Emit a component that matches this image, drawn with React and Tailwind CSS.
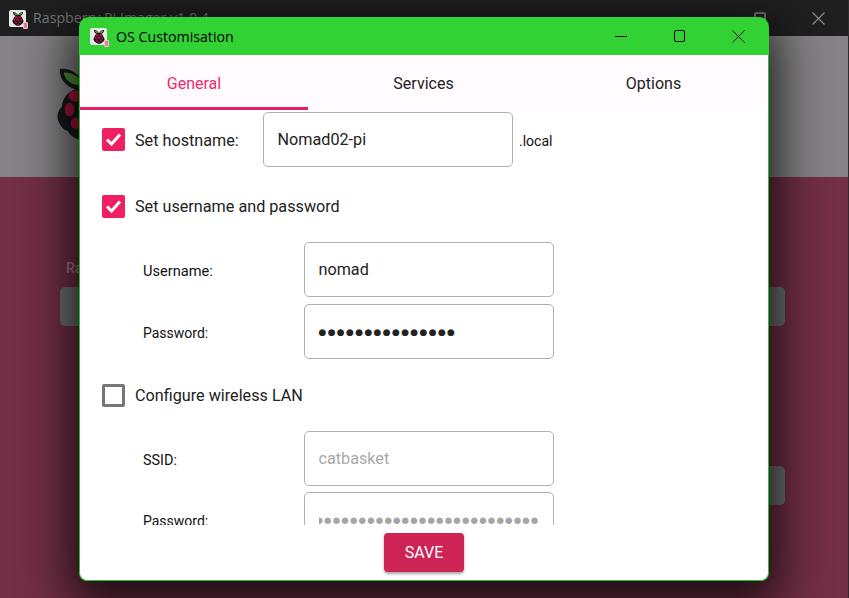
const roboto = { fontFamily: 'Roboto, sans-serif' };

function Berry({ size, className = '' }) {
  return (
    <svg viewBox="0 0 64 80" width={size} height={size * 1.25} className={className}>
      <path d="M32 22C24 8 14 4 5 5c-1 9 6 19 16 21-8 3-13 9-14 18-4 4-6 10-3 16 2 5 5 8 9 9 3 6 10 10 19 10s16-4 19-10c4-1 7-4 9-9 3-6 1-12-3-16-1-9-6-15-14-18 10-2 17-12 16-21-9-1-19 3-27 17z" fill="#16181a" />
      <path d="M30 21C24 12 16 8 9 9c1 7 9 15 21 12zM34 21c6-9 14-13 21-12-1 7-9 15-21 12z" fill="#4f9136" />
      <g fill="#a5143c">
        <ellipse cx="22" cy="33" rx="8" ry="6" />
        <ellipse cx="42" cy="33" rx="8" ry="6" />
        <ellipse cx="32" cy="46" rx="8" ry="7" />
        <ellipse cx="15" cy="47" rx="5" ry="7" />
        <ellipse cx="49" cy="47" rx="5" ry="7" />
        <ellipse cx="22" cy="61" rx="6" ry="6" />
        <ellipse cx="42" cy="61" rx="6" ry="6" />
        <ellipse cx="32" cy="70" rx="6" ry="4" />
      </g>
    </svg>
  );
}

function AppIcon() {
  return (
    <div className="relative w-[17px] h-[17px] bg-[#e9e9e9] rounded-[2px] flex items-center justify-center shrink-0">
      <Berry size={12} />
      <span className="absolute right-[-2px] bottom-[-2px] w-[5px] h-[7px] bg-[#e77f98] rounded-[1px] border border-[#f3c2cf]" />
    </div>
  );
}

function Check({ checked }) {
  if (!checked) {
    return <div className="w-[23px] h-[23px] rounded-[2px] border-[3px] border-[#777777] shrink-0" />;
  }
  return (
    <div className="w-[23px] h-[23px] rounded-[2px] bg-[#ee2060] shrink-0 flex items-center justify-center">
      <svg width="19" height="19" viewBox="0 0 19 19" fill="none">
        <path d="M3 9.5l4.5 4.5L16 4.5" stroke="#fff" strokeWidth="3" />
      </svg>
    </div>
  );
}

function Field({ children, className = '' }) {
  return (
    <div className={`w-[250px] h-[55px] shrink-0 rounded-[5px] border-[1.5px] border-[#b0b0b0] bg-white px-[13.5px] pt-[2px] flex items-center text-[16.2px] ${className}`}>
      {children}
    </div>
  );
}

function SubRow({ label, labelSize = 'text-[14.6px]', children, className = '' }) {
  return (
    <div className={`flex items-center ${className}`}>
      <span className={`w-[202px] pl-[41px] pt-[4px] text-[#111] shrink-0 ${labelSize}`}>{label}</span>
      {children}
    </div>
  );
}

export default function App() {
  return (
    <div className="relative w-[849px] h-[598px] overflow-hidden bg-[#722f46]" style={roboto}>
      {/* Window behind the dialog */}
      <div className="h-[36px] bg-[#1f1f1f] flex items-center pl-[9px] pr-[24px]">
        <AppIcon />
        <span className="ml-[7px] text-[14.2px] text-[#77787a]" style={{ fontFamily: '"Open Sans", sans-serif' }}>Raspberry Pi Imager v1.0.4</span>
        <div className="ml-auto flex items-center gap-[46px]">
          <div className="w-[12px] h-[12px] border-2 border-[#6f6f6f] rounded-[2px]" />
          <svg width="13" height="13" viewBox="0 0 13 13" stroke="#8a8a8a" strokeWidth="1.2">
            <path d="M.5.5l12 12M12.5.5l-12 12" />
          </svg>
        </div>
      </div>
      <div className="h-[141px] bg-[#848284] pl-[55px] pt-[28px]">
        <Berry size={62} />
      </div>
      <div className="relative pl-[60px] pt-[81px] h-[421px]">
        <div className="pl-[6px] text-[14px] font-medium text-[#a57a88]">Ra</div>
        <div className="mt-[8px] w-[725px] h-[39px] bg-[#707070] rounded-[5px]" />
        <div className="mt-[140px] ml-[665px] w-[60px] h-[39px] bg-[#707070] rounded-[5px]" />
      </div>
      <div className="absolute right-0 top-0 w-px h-full bg-[#2c2c2c]" />

      {/* Dialog */}
      <div className="absolute left-[79px] top-[17px] w-[690px] h-[564px] flex flex-col rounded-[8px] shadow-[0_16px_48px_10px_rgba(0,0,0,0.75)]">
        <div className="h-[38px] bg-[#32d134] rounded-t-[10px] flex items-center pl-[11px] shrink-0">
          <AppIcon />
          <span className="ml-[9px] pt-[1px] text-[14.2px] text-black" style={{ fontFamily: '"Open Sans", sans-serif' }}>OS Customisation</span>
          <div className="ml-auto flex items-center pr-[24px] gap-[47px]">
            <div className="w-[12px] h-px bg-black" />
            <div className="w-[11px] h-[12px] border border-black rounded-[2px]" />
            <svg width="13" height="13" viewBox="0 0 13 13" stroke="#000" strokeWidth="1">
              <path d="M.5.5l12 12M12.5.5l-12 12" />
            </svg>
          </div>
        </div>
        <div className="flex-1 min-h-0 flex flex-col bg-white border-x border-b border-[#22c322] rounded-b-[8px]">
          <div className="h-[55px] grid grid-cols-[228px_231px_1fr] bg-[#fffbff] shrink-0 text-[16px]">
            <div className="flex items-center justify-center pt-[6px] border-b-[3px] border-[#e91e63] text-[#ee2a6b]">General</div>
            <div className="flex items-center justify-center pt-[2px] text-[#222]">Services</div>
            <div className="flex items-center justify-center pt-[2px] text-[#222]">Options</div>
          </div>
          <div className="h-[415px] overflow-hidden pl-[22px] flex flex-col shrink-0 text-[16.2px] text-[#222]">
            <div className="flex items-center mt-[2px] h-[55px] shrink-0">
              <Check checked />
              <span className="ml-[10px] w-[128px] pt-[3px]">Set hostname:</span>
              <Field>Nomad02-pi</Field>
              <span className="ml-[6px] text-[14px] mt-[3px] text-[#111]">.local</span>
            </div>
            <div className="flex items-center mt-[28px] h-[23px] shrink-0">
              <Check checked />
              <span className="ml-[10px] pt-[1px]">Set username and password</span>
            </div>
            <SubRow label="Username:" className="mt-[24px]">
              <Field>nomad</Field>
            </SubRow>
            <SubRow label="Password:" labelSize="text-[14px]" className="mt-[7px]">
              <Field>
                <span className="text-[9px] tracking-[1.33px] leading-none whitespace-nowrap text-[#222]" style={{ fontFamily: '"DejaVu Sans", sans-serif' }}>●●●●●●●●●●●●●●●</span>
              </Field>
            </SubRow>
            <div className="flex items-center mt-[25px] h-[23px] shrink-0">
              <Check />
              <span className="ml-[10px] pt-[1px]">Configure wireless LAN</span>
            </div>
            <SubRow label="SSID:" labelSize="text-[14.4px]" className="mt-[24px]">
              <Field><span className="text-[#a9a9a9]">catbasket</span></Field>
            </SubRow>
            <SubRow label="Password:" labelSize="text-[14px]" className="mt-[6px]">
              <Field>
                <div className="flex-1 min-w-0 overflow-hidden flex justify-end">
                  <span className="text-[8.5px] tracking-[1.2px] leading-none whitespace-nowrap text-[#a5a5a5]" style={{ fontFamily: '"DejaVu Sans", sans-serif' }}>●●●●●●●●●●●●●●●●●●●●●●●●●●●●●●</span>
                </div>
              </Field>
            </SubRow>
          </div>
          <div className="flex justify-center pt-[8px]">
            <button className="w-[80px] h-[39px] rounded-[4px] bg-[#cd2355] text-white text-[16px] shadow-[0_2px_3px_rgba(0,0,0,0.35)]">SAVE</button>
          </div>
        </div>
      </div>
    </div>
  );
}
